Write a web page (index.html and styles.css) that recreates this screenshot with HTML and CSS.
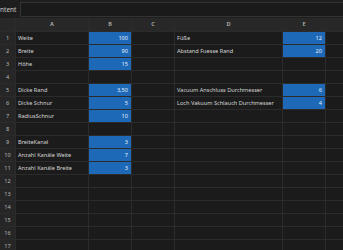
FILE: index.html
```html
<!DOCTYPE html>
<html lang="de">
<head>
    <meta charset="UTF-8">
    <link rel="stylesheet" href="styles.css">
</head>
<body>
    <div class="topbar">
        <span class="label">Content</span>
        <div class="content-input"></div>
    </div>
    <div class="sheet">
        <div class="row head">
            <div class="num"></div><div>A</div><div>B</div><div>C</div><div>D</div><div>E</div><div></div>
        </div>
        <div class="row">
            <div class="num">1</div><div>Weite</div><div class="val">100</div><div></div><div>Füße</div><div class="val">12</div><div></div>
        </div>
        <div class="row">
            <div class="num">2</div><div>Breite</div><div class="val">90</div><div></div><div>Abstand Fuesse Rand</div><div class="val">20</div><div></div>
        </div>
        <div class="row">
            <div class="num">3</div><div>Höhe</div><div class="val">15</div><div></div><div></div><div></div><div></div>
        </div>
        <div class="row">
            <div class="num">4</div><div></div><div></div><div></div><div></div><div></div><div></div>
        </div>
        <div class="row">
            <div class="num">5</div><div>Dicke Rand</div><div class="val">3,50</div><div></div><div>Vacuum Anschluss Durchmesser</div><div class="val">6</div><div></div>
        </div>
        <div class="row">
            <div class="num">6</div><div>Dicke Schnur</div><div class="val">5</div><div></div><div>Loch Vakuum Schlauch Durchmesser</div><div class="val">4</div><div></div>
        </div>
        <div class="row">
            <div class="num">7</div><div>RadiusSchnur</div><div class="val">10</div><div></div><div></div><div></div><div></div>
        </div>
        <div class="row">
            <div class="num">8</div><div></div><div></div><div></div><div></div><div></div><div></div>
        </div>
        <div class="row">
            <div class="num">9</div><div>BreiteKanal</div><div class="val">3</div><div></div><div></div><div></div><div></div>
        </div>
        <div class="row">
            <div class="num">10</div><div>Anzahl Kanäle Weite</div><div class="val">7</div><div></div><div></div><div></div><div></div>
        </div>
        <div class="row">
            <div class="num">11</div><div>Anzahl Kanäle Breite</div><div class="val">3</div><div></div><div></div><div></div><div></div>
        </div>
        <div class="row">
            <div class="num">12</div><div></div><div></div><div></div><div></div><div></div><div></div>
        </div>
        <div class="row">
            <div class="num">13</div><div></div><div></div><div></div><div></div><div></div><div></div>
        </div>
        <div class="row">
            <div class="num">14</div><div></div><div></div><div></div><div></div><div></div><div></div>
        </div>
        <div class="row">
            <div class="num">15</div><div></div><div></div><div></div><div></div><div></div><div></div>
        </div>
        <div class="row">
            <div class="num">16</div><div></div><div></div><div></div><div></div><div></div><div></div>
        </div>
        <div class="row">
            <div class="num">17</div><div></div><div></div><div></div><div></div><div></div><div></div>
        </div>
    </div>
</body>
</html>
```

FILE: styles.css
```css
/* Global */
* {
    margin: 0;
    padding: 0;
    box-sizing: border-box;
}
body {
    font-family: "Noto Sans", "DejaVu Sans", sans-serif;
    font-size: 5.6px;
    background-color: #1b1b1b;
    color: #d4d4d4;
    width: 343px;
    height: 250px;
    overflow: hidden;
}

/* Top bar */
.topbar {
    display: flex;
    align-items: center;
    height: 18px;
    background-color: #1e1e1e;
    gap: 3px;
    padding-top: 1px;
}
.label {
    margin-left: -8px;
    font-size: 6.5px;
    color: #c8c8c8;
}
.content-input {
    flex: 1;
    height: 15px;
    background-color: #1a1a1a;
    border: 1px solid #333;
    border-right: none;
    margin-left: 1px;
}

/* Sheet */
.sheet {
    display: flex;
    flex-direction: column;
    gap: 1px;
    background-color: #2b2b2b;
}
.row {
    display: grid;
    grid-template-columns: 15px 72px 42px 42px 107px 42px 1fr;
    gap: 1px;
    height: 12px;
}
.row > div {
    background-color: #1b1b1b;
    line-height: 12px;
    padding: 0 2px;
    white-space: nowrap;
    overflow: hidden;
}
.row.head {
    height: 13px;
}
.row.head > div {
    background-color: #282828;
    line-height: 13px;
    text-align: center;
    color: #b4b4b4;
    font-weight: 600;
}
.row > .num {
    background-color: #262626;
    text-align: center;
    color: #b8b8b8;
    padding: 0;
}
.row > .val {
    background-color: #1d69b8;
    color: #e6eef8;
    text-align: right;
    padding-right: 3px;
}
```
